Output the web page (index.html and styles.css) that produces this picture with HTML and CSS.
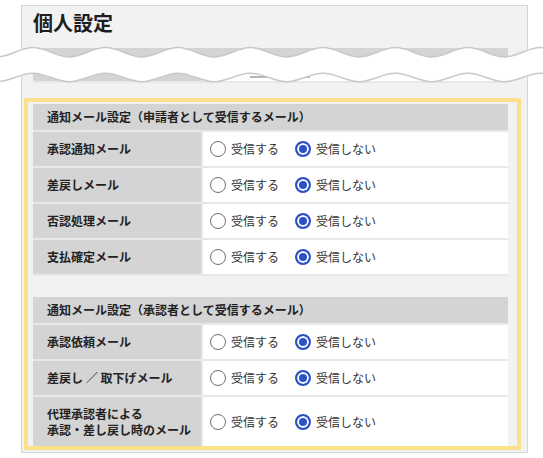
FILE: index.html
```html
<!DOCTYPE html>
<html lang="ja">
<head>
    <meta charset="UTF-8">
    <meta name="viewport" content="width=device-width, initial-scale=1.0">
    <title>個人設定</title>
    <link rel="stylesheet" href="styles.css">
</head>
<body>

    <div class="panel">
        <h2 class="page-title">個人設定</h2>

        <!-- upper settings, folded away -->
        <div class="cut">
            <div class="cut-head"></div>
            <div class="cut-row">
                <div class="cut-label"></div>
                <div class="cut-value"><div class="cut-input"></div></div>
            </div>
        </div>

        <div class="highlight">
            <table class="settings">
                <colgroup><col class="col-label"><col></colgroup>
                <tr>
                    <th colspan="2">通知メール設定（申請者として受信するメール）</th>
                </tr>
                <tr>
                    <td class="label">承認通知メール</td>
                    <td class="value">
                        <div class="choices">
                            <label class="opt"><input type="radio" name="notify_approved" value="1">受信する</label>
                            <label class="opt"><input type="radio" name="notify_approved" value="0" checked>受信しない</label>
                        </div>
                    </td>
                </tr>
                <tr>
                    <td class="label">差戻しメール</td>
                    <td class="value">
                        <div class="choices">
                            <label class="opt"><input type="radio" name="notify_returned" value="1">受信する</label>
                            <label class="opt"><input type="radio" name="notify_returned" value="0" checked>受信しない</label>
                        </div>
                    </td>
                </tr>
                <tr>
                    <td class="label">否認処理メール</td>
                    <td class="value">
                        <div class="choices">
                            <label class="opt"><input type="radio" name="notify_rejected" value="1">受信する</label>
                            <label class="opt"><input type="radio" name="notify_rejected" value="0" checked>受信しない</label>
                        </div>
                    </td>
                </tr>
                <tr>
                    <td class="label">支払確定メール</td>
                    <td class="value">
                        <div class="choices">
                            <label class="opt"><input type="radio" name="notify_paid" value="1">受信する</label>
                            <label class="opt"><input type="radio" name="notify_paid" value="0" checked>受信しない</label>
                        </div>
                    </td>
                </tr>
            </table>

            <table class="settings settings-last">
                <colgroup><col class="col-label"><col></colgroup>
                <tr>
                    <th colspan="2">通知メール設定（承認者として受信するメール）</th>
                </tr>
                <tr>
                    <td class="label">承認依頼メール</td>
                    <td class="value">
                        <div class="choices">
                            <label class="opt"><input type="radio" name="notify_request" value="1">受信する</label>
                            <label class="opt"><input type="radio" name="notify_request" value="0" checked>受信しない</label>
                        </div>
                    </td>
                </tr>
                <tr>
                    <td class="label">差戻し ／ 取下げメール</td>
                    <td class="value">
                        <div class="choices">
                            <label class="opt"><input type="radio" name="notify_withdraw" value="1">受信する</label>
                            <label class="opt"><input type="radio" name="notify_withdraw" value="0" checked>受信しない</label>
                        </div>
                    </td>
                </tr>
                <tr>
                    <td class="label">代理承認者による<br>承認・差し戻し時のメール</td>
                    <td class="value">
                        <div class="choices">
                            <label class="opt"><input type="radio" name="notify_proxy" value="1">受信する</label>
                            <label class="opt"><input type="radio" name="notify_proxy" value="0" checked>受信しない</label>
                        </div>
                    </td>
                </tr>
            </table>
        </div>
    </div>

    <!-- torn-paper band across the folded section -->
    <svg class="tear" width="543" height="50" viewBox="0 0 543 50">
        <path d="M -39.5 7.6 C -26.3 7.6, -16.45 17, -3.25 17
                 S 19.8 7.6, 33 7.6 S 56.05 17, 69.25 17
                 S 92.3 7.6, 105.5 7.6 S 128.55 17, 141.75 17
                 S 164.8 7.6, 178 7.6 S 201.05 17, 214.25 17
                 S 237.3 7.6, 250.5 7.6 S 273.55 17, 286.75 17
                 S 309.8 7.6, 323 7.6 S 346.05 17, 359.25 17
                 S 382.3 7.6, 395.5 7.6 S 418.55 17, 431.75 17
                 S 454.8 7.6, 468 7.6 S 491.05 17, 504.25 17
                 S 527.3 7.6, 540.5 7.6 S 563.55 17, 576.75 17
                 L 576.75 41.7
                 C 563.55 41.7, 553.7 33.3, 540.5 33.3
                 S 517.45 41.7, 504.25 41.7 S 481.2 33.3, 468 33.3
                 S 444.95 41.7, 431.75 41.7 S 408.7 33.3, 395.5 33.3
                 S 372.45 41.7, 359.25 41.7 S 336.2 33.3, 323 33.3
                 S 299.95 41.7, 286.75 41.7 S 263.7 33.3, 250.5 33.3
                 S 227.45 41.7, 214.25 41.7 S 191.2 33.3, 178 33.3
                 S 154.95 41.7, 141.75 41.7 S 118.7 33.3, 105.5 33.3
                 S 82.45 41.7, 69.25 41.7 S 46.2 33.3, 33 33.3
                 S 9.95 41.7, -3.25 41.7 S -26.3 33.3, -39.5 33.3 Z"
              fill="#fff" stroke="#c9c9c9" stroke-width="1.5"/>
    </svg>

</body>
</html>
```

FILE: styles.css
```css
* {
    margin: 0;
    padding: 0;
    box-sizing: border-box;
    font-family: "Noto Sans CJK JP", "Noto Sans", sans-serif;
}

body {
    position: relative;
    background-color: #fff;
    color: #222;
}

.panel {
    width: 507px;
    margin: 5px 0 0 21px;
    padding: 0 6px 2px 2px;
    background-color: #f2f2f2;
    border: 1px solid #d6d6d6;
}

.page-title {
    padding: 4px 0 0 9px;
    font-size: 20px;
    line-height: 26px;
    font-weight: 700;
    color: #1e1e1e;
}

/* folded section */
.cut {
    margin: 12px 13px 0 9px;
}

.cut-head {
    height: 14px;
    background-color: #d4d4d4;
}

.cut-row {
    display: flex;
    height: 21px;
    border-bottom: 2px solid #e8e8e8;
}

.cut-label {
    width: 170px;
    background-color: #d4d4d4;
    border-right: 2px solid #e8e8e8;
}

.cut-value {
    flex: 1;
    background-color: #fff;
}

.cut-input {
    width: 60px;
    margin: 14px 0 0 47px;
    border-top: 2px solid #b4b4b4;
}

.tear {
    position: absolute;
    top: 40px;
    left: 0;
    overflow: visible;
}

/* highlighted notification settings */
.highlight {
    margin-top: 15px;
    padding: 2px 9px 0 5px;
    border: 4px solid #fbe18c;
}

.settings {
    width: 100%;
    border-collapse: separate;
    border-spacing: 0;
    table-layout: fixed;
    font-size: 12px;
    line-height: 16px;
}

.col-label {
    width: 170px;
}

.settings-last {
    margin-top: 21px;
}

.settings th {
    height: 28px;
    padding: 5px 14px;
    text-align: left;
    font-weight: 700;
    background-color: #d4d4d4;
    border-bottom: 2px solid #e8e8e8;
}

.settings td {
    height: 36px;
    padding: 9px 4px 9px 14px;
    border-bottom: 2px solid #e8e8e8;
    vertical-align: middle;
}

.settings .label {
    font-weight: 700;
    background-color: #d4d4d4;
    border-right: 2px solid #e8e8e8;
}

.settings .value {
    padding-left: 7px;
    background-color: #fff;
    color: #333;
}

.settings-last tr:last-child td {
    height: 49px;
    padding-bottom: 8px;
    border-bottom: none;
}

.choices {
    display: flex;
    align-items: center;
    height: 16px;
}

.opt {
    display: flex;
    align-items: center;
    gap: 5px;
    margin-right: 16px;
    cursor: pointer;
}

.opt input {
    appearance: none;
    -webkit-appearance: none;
    flex: none;
    width: 16px;
    height: 16px;
    margin: 0;
    border: 1.5px solid #707070;
    border-radius: 50%;
    background-color: #fff;
    cursor: pointer;
}

.opt input:checked {
    border: 2px solid #2b51c7;
    background-color: #2b51c7;
    box-shadow: inset 0 0 0 2px #fff;
}
```
